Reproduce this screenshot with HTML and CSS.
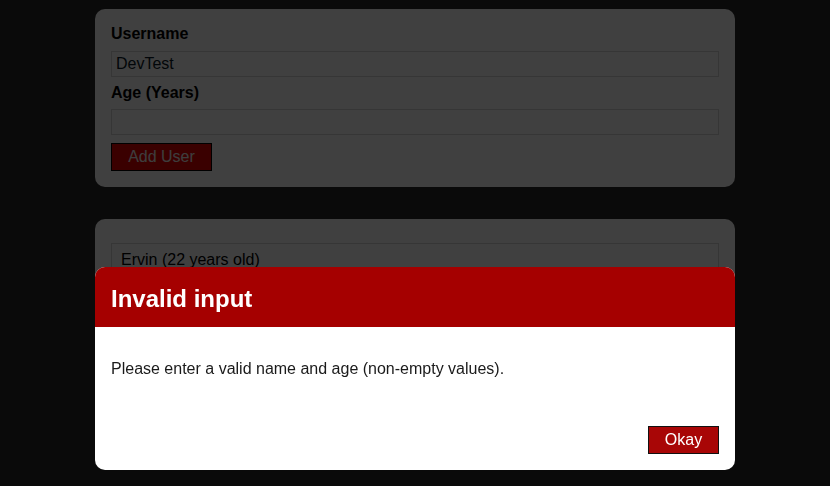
FILE: index.html
```html
<!DOCTYPE html>
<html lang="en">
<head>
<meta charset="utf-8">
<title>Users</title>
<link rel="stylesheet" href="styles.css">
</head>
<body>
<main class="page">
  <section class="card">
    <form class="form">
      <label class="label" for="username">Username</label>
      <input class="input" id="username" type="text" value="DevTest">
      <label class="label" for="age">Age (Years)</label>
      <input class="input" id="age" type="number">
      <button class="btn" type="button">Add User</button>
    </form>
  </section>
  <section class="card">
    <ul class="users">
      <li class="user">Ervin (22 years old)</li>
    </ul>
  </section>
</main>
<div class="backdrop"></div>
<div class="modal">
  <header class="modal-header"><h2 class="modal-title">Invalid input</h2></header>
  <div class="modal-content"><p class="modal-text">Please enter a valid name and age (non-empty values).</p></div>
  <footer class="modal-actions"><button class="btn btn-modal" type="button">Okay</button></footer>
</div>
</body>
</html>
```
FILE: styles.css
```css
* { box-sizing: border-box; }
html, body { margin: 0; height: 100%; overflow: hidden; }
body {
  background: #292929;
  font-family: "Liberation Sans", Arial, sans-serif;
  font-size: 16px;
  color: #000;
}
.page {
  width: 640px;
  margin: 0 auto;
  padding-top: 9px;
  display: flex;
  flex-direction: column;
  gap: 32px;
}
.card {
  background: #fff;
  border-radius: 10px;
  padding: 16px;
}
.form { display: flex; flex-direction: column; align-items: flex-start; }
.label {
  font-weight: bold;
  line-height: 18px;
  margin-bottom: 8px;
}
.input {
  width: 100%;
  height: 26px;
  border: 1px solid #d8d8d8;
  font: inherit;
  font-size: 16px;
  padding: 0 4px;
  margin: 0 0 7px;
  color: #0b1a28;
  background: #fff;
}
.input + .label { margin-bottom: 7px; }
.btn {
  font: inherit;
  font-size: 16px;
  height: 28px;
  padding: 0 16px;
  background: #e80000;
  border: 1px solid #000;
  color: #f4f4f4;
  cursor: pointer;
}
.form .btn { width: 101px; margin-top: 1px; }
.users { list-style: none; margin: 8px 0 0; padding: 0; }
.user {
  border: 1px solid #d8d8d8;
  padding: 7px 9px;
  line-height: 18px;
  margin-bottom: 8px;
}
.backdrop {
  position: fixed;
  inset: 0;
  background: rgba(0, 0, 0, 0.75);
  z-index: 10;
}
.modal {
  position: fixed;
  top: 267px;
  left: 95px;
  width: 640px;
  background: #fff;
  border-radius: 10px;
  overflow: hidden;
  z-index: 20;
}
.modal-header {
  background: #a50000;
  padding: 18px 16px 14px;
  height: 60px;
}
.modal-title {
  margin: 0;
  color: #fff;
  font-size: 24px;
  line-height: 28px;
  font-weight: bold;
}
.modal-content { padding: 16px; }
.modal-text { margin: 16px 0; line-height: 19px; color: #1a1a1a; font-size: 16px; }
.modal-actions {
  padding: 16px;
  display: flex;
  justify-content: flex-end;
}
.btn-modal {
  width: 71px;
  padding: 0;
  background: #a80606;
  border-color: #111;
  color: #fff;
}
```
